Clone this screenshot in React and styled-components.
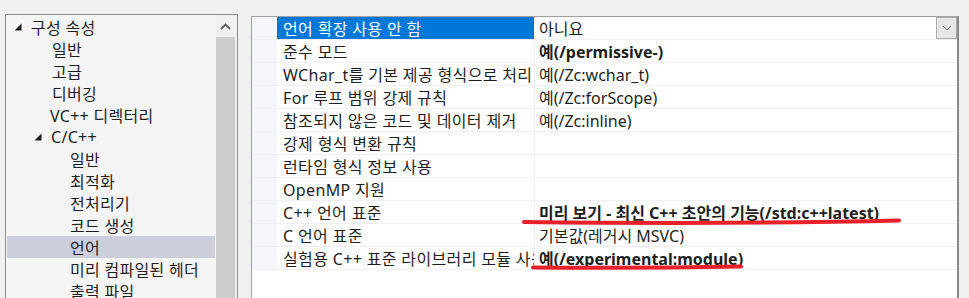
import React from "react";
import styled, { createGlobalStyle } from "styled-components";

const Global = createGlobalStyle`
  html, body { margin: 0; padding: 0; background: #f0f0f0; overflow: hidden; }
  body { font-family: "Noto Sans", "Noto Sans CJK KR", sans-serif; font-size: 16px; color: #1e1e1e; }
`;

const Page = styled.div`
  display: flex;
  align-items: flex-start;
  gap: 13px;
  padding: 14px 0 0 5px;
  height: 298px;
  box-sizing: border-box;
`;

const TreePanel = styled.div`
  display: flex;
  width: 233px;
  height: 300px;
  box-sizing: border-box;
  border: 1px solid #8c8c8c;
  background: #f5f5f5;
`;

const TreeList = styled.div`
  flex: 1;
  display: flex;
  flex-direction: column;
  padding: 1px 1px 0 1px;
`;

const TreeRow = styled.div`
  height: 22px;
  flex: none;
  display: flex;
  align-items: center;
  padding-left: ${(p) => p.$indent}px;
  background: ${(p) => (p.$selected ? "#cccedb" : "transparent")};
  white-space: nowrap;
  font-size: 16px;
  letter-spacing: 0.3px;
  color: #1e1e1e;
`;

const Expander = styled.span`
  display: inline-flex;
  width: 17px;
  margin-left: -1px;
  align-items: center;
`;

const Scrollbar = styled.div`
  width: 21px;
  display: flex;
  flex-direction: column;
  background: #f0f0f0;
`;

const ScrollArrow = styled.div`
  height: 22px;
  width: 19px;
  display: flex;
  align-items: center;
  justify-content: center;
`;

const Thumb = styled.div`
  flex: 1;
  width: 19px;
  background: #cdcdcd;
`;

const GridPanel = styled.div`
  position: relative;
  margin-top: 2px;
  width: 708px;
  height: 300px;
  box-sizing: border-box;
  border: 1px solid #a0a0a0;
  border-right-width: 2px;
  border-right-color: #8a8a8a;
  background: #ffffff;
`;

const GridRow = styled.div`
  display: flex;
  height: 23px;
  box-sizing: border-box;
  border-bottom: 1px solid #f0f0f4;
`;

const MarginCell = styled.div`
  width: 25px;
  background: #f4f6fb;
`;

const NameCell = styled.div`
  width: 258px;
  display: flex;
  align-items: center;
  padding-left: 6px;
  box-sizing: border-box;
  overflow: hidden;
  white-space: nowrap;
  letter-spacing: 0.35px;
  background: ${(p) => (p.$selected ? "#0078d7" : "transparent")};
  color: ${(p) => (p.$selected ? "#ffffff" : "#1e1e1e")};
  border-right: 1px solid #f0f0f4;
`;

const ValueCell = styled.div`
  flex: 1;
  display: flex;
  align-items: center;
  padding-left: 4px;
  white-space: nowrap;
  font-weight: ${(p) => (p.$bold ? 700 : 400)};
  color: #1e1e1e;
  position: relative;
`;

const DropButton = styled.div`
  position: absolute;
  right: 0;
  top: 0;
  width: 21px;
  height: 22px;
  box-sizing: border-box;
  background: #e6e6e6;
  border: 1px solid #adadad;
  display: flex;
  align-items: center;
  justify-content: center;
`;

const Annotation = styled.svg`
  position: absolute;
  left: 0;
  top: 0;
  pointer-events: none;
`;

const tree = [
  { label: "구성 속성", indent: 8, expand: true },
  { label: "일반", indent: 45 },
  { label: "고급", indent: 45 },
  { label: "디버깅", indent: 45 },
  { label: "VC++ 디렉터리", indent: 43 },
  { label: "C/C++", indent: 28, expand: true },
  { label: "일반", indent: 63 },
  { label: "최적화", indent: 63 },
  { label: "전처리기", indent: 63 },
  { label: "코드 생성", indent: 63 },
  { label: "언어", indent: 63, selected: true },
  { label: "미리 컴파일된 헤더", indent: 63 },
  { label: "출력 파일", indent: 63 },
];

const rows = [
  { name: "언어 확장 사용 안 함", value: "아니요", selected: true, drop: true },
  { name: "준수 모드", value: "예(/permissive-)", bold: true },
  { name: "WChar_t를 기본 제공 형식으로 처리", value: "예(/Zc:wchar_t)" },
  { name: "For 루프 범위 강제 규칙", value: "예(/Zc:forScope)" },
  { name: "참조되지 않은 코드 및 데이터 제거", value: "예(/Zc:inline)" },
  { name: "강제 형식 변환 규칙", value: "" },
  { name: "런타임 형식 정보 사용", value: "" },
  { name: "OpenMP 지원", value: "" },
  { name: "C++ 언어 표준", value: "미리 보기 - 최신 C++ 초안의 기능(/std:c++latest)", bold: true },
  { name: "C 언어 표준", value: "기본값(레거시 MSVC)" },
  { name: "실험용 C++ 표준 라이브러리 모듈 사용", value: "예(/experimental:module)", bold: true },
];

const Triangle = () => (
  <svg width="8" height="8" viewBox="0 0 8 8">
    <polygon points="7.5,0.5 7.5,7.5 0.5,7.5" fill="#1e1e1e" />
  </svg>
);

export default function App() {
  return (
    <>
      <Global />
      <Page>
        <TreePanel>
          <TreeList>
            {tree.map((t, i) => (
              <TreeRow key={i} $indent={t.indent} $selected={t.selected}>
                {t.expand && (
                  <Expander>
                    <Triangle />
                  </Expander>
                )}
                {t.label}
              </TreeRow>
            ))}
          </TreeList>
          <Scrollbar>
            <ScrollArrow>
              <svg width="11" height="7" viewBox="0 0 11 7">
                <polyline points="1,6 5.5,1.5 10,6" fill="none" stroke="#606060" strokeWidth="1.8" />
              </svg>
            </ScrollArrow>
            <Thumb />
          </Scrollbar>
        </TreePanel>
        <GridPanel>
          {rows.map((r, i) => (
            <GridRow key={i}>
              <MarginCell />
              <NameCell $selected={r.selected}>{r.name}</NameCell>
              <ValueCell $bold={r.bold}>
                {r.value}
                {r.drop && (
                  <DropButton>
                    <svg width="10" height="6" viewBox="0 0 10 6">
                      <polyline points="1,1 5,5 9,1" fill="none" stroke="#707070" strokeWidth="1" />
                    </svg>
                  </DropButton>
                )}
              </ValueCell>
            </GridRow>
          ))}
          <Annotation width="706" height="290" viewBox="0 0 706 290">
            <path d="M272,205 C400,206.5 540,206 647,203.5" fill="none" stroke="#e8202a" strokeWidth="4" strokeLinecap="round" />
            <path d="M281,250.5 C360,251 430,250.5 489,249.5" fill="none" stroke="#e8202a" strokeWidth="4" strokeLinecap="round" />
          </Annotation>
        </GridPanel>
      </Page>
    </>
  );
}
